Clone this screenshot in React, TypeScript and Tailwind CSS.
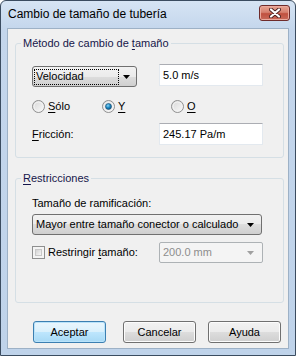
import React from "react";

const U = ({ children }: { children: React.ReactNode }) => (
  <span className="underline decoration-1 underline-offset-[2px]">{children}</span>
);

const Arrow = ({ color = "#000" }: { color?: string }) => (
  <svg width="7" height="4" viewBox="0 0 7 4">
    <path d="M0 0h7L3.5 4z" fill={color} />
  </svg>
);

const Radio = ({ checked }: { checked?: boolean }) => (
  <svg width="13" height="13" viewBox="0 0 13 13">
    <defs>
      <linearGradient id="rg" x1="0" y1="0" x2="1" y2="1">
        <stop offset="0" stopColor="#d6d6d6" />
        <stop offset="1" stopColor="#fbfbfb" />
      </linearGradient>
      <radialGradient id="rd" cx="0.4" cy="0.35" r="0.7">
        <stop offset="0" stopColor="#8cd4f5" />
        <stop offset="0.5" stopColor="#1d8ac4" />
        <stop offset="1" stopColor="#0b4f7c" />
      </radialGradient>
    </defs>
    <circle cx="6.5" cy="6.5" r="6" fill="url(#rg)" stroke="#8f8f8f" />
    <circle cx="6.5" cy="6.5" r="4.5" fill="none" stroke="#f4f4f4" />
    {checked && <circle cx="6.5" cy="6.5" r="3" fill="url(#rd)" stroke="#1b4f75" strokeWidth="0.6" />}
  </svg>
);

const TextBox = ({ value }: { value: string }) => (
  <div className="w-[104px] h-[22px] bg-white border border-[#e3e9ef] border-t-[#abadb3] flex items-center pl-[3px] text-black">
    {value}
  </div>
);

const Button = ({ label, primary }: { label: string; primary?: boolean }) => (
  <div
    className={
      "w-[73px] h-[22px] rounded-[3px] border flex items-center justify-center text-black " +
      (primary
        ? "border-[#3c7fb1] bg-[linear-gradient(#eaf6fd,#d9f0fc_50%,#bee6fd_50%,#a7d9f5)] shadow-[inset_0_0_0_1px_#b9e3fa]"
        : "border-[#707070] bg-[linear-gradient(#f2f2f2,#ebebeb_50%,#dddddd_50%,#cfcfcf)] shadow-[inset_0_0_0_1px_#fcfcfc]")
    }
  >
    {label}
  </div>
);

export default function App() {
  return (
    <div
      className="w-[296px] h-[356px] flex flex-col border border-[#3b4c60] rounded-t-[6px] bg-[linear-gradient(#d6e4f4,#c4d6ec_28px,#bfd3ea)] text-[11px] leading-[13px]"
      style={{ fontFamily: '"Liberation Sans", Arial, sans-serif' }}
    >
      <div className="h-[27px] flex items-center justify-between pl-[7px] pr-[5px]">
        <span className="text-[12px] text-black">Cambio de tamaño de tubería</span>
        <div className="w-[31px] h-[16px] mt-[-3px] rounded-[3px] border border-[#6e2b2b] bg-[linear-gradient(#e8a493,#d6806f_45%,#c0503f_55%,#c86a5a)] shadow-[inset_0_0_0_1px_#eaa99d] flex items-center justify-center">
          <svg width="12" height="10" viewBox="0 0 12 10">
            <path d="M2 1.5l8 7M10 1.5l-8 7" stroke="#4a2020" strokeWidth="4" strokeLinecap="round" />
            <path d="M2 1.5l8 7M10 1.5l-8 7" stroke="#fff" strokeWidth="2.2" strokeLinecap="round" />
          </svg>
        </div>
      </div>

      <div className="mx-[6px] mb-[6px] flex-1 border border-[#9db1c6] bg-[#f0f0f0] flex flex-col">
        <fieldset className="ml-[7px] mt-[7px] w-[269px] border border-[#d5dfe5] rounded-[3px] pl-[16px] pt-[14px] pb-[12px]">
          <legend className="ml-[-11px] px-[2px] text-[11px] leading-[14px] text-[#16164a]">
            Método de cambio de <U>t</U>amaño
          </legend>
          <div className="flex items-start">
            <div className="mt-[2px] w-[105px] h-[21px] rounded-[3px] border border-[#707070] bg-[linear-gradient(#f2f2f2,#ebebeb_50%,#dddddd_50%,#cfcfcf)] flex items-center pl-[1px] pr-[6px]">
              <div className="w-[85px] h-[16px] border border-dotted border-black flex items-center pl-[1px] text-black">
                Velocidad
              </div>
              <div className="ml-auto">
                <Arrow />
              </div>
            </div>
            <div className="ml-[22px]">
              <TextBox value="5.0 m/s" />
            </div>
          </div>
          <div className="mt-[13px] flex items-center h-[13px] text-black">
            <div className="w-[70px] flex items-center gap-[3px]">
              <Radio />
              <span><U>S</U>ólo</span>
            </div>
            <div className="w-[69px] flex items-center gap-[3px]">
              <Radio checked />
              <span><U>Y</U></span>
            </div>
            <div className="flex items-center gap-[3px]">
              <Radio />
              <span><U>O</U></span>
            </div>
          </div>
          <div className="mt-[10px] flex items-center text-black">
            <span className="w-[127px]"><U>F</U>ricción:</span>
            <TextBox value="245.17 Pa/m" />
          </div>
        </fieldset>

        <fieldset className="ml-[7px] mt-[13px] w-[269px] border border-[#d5dfe5] rounded-[3px] pl-[16px] pt-[12px] pb-[39px]">
          <legend className="ml-[-11px] px-[2px] text-[11px] leading-[14px] text-[#16164a]">
            <U>R</U>estricciones
          </legend>
          <div className="text-black">Tamaño de ramificación:</div>
          <div className="mt-[4px] w-[230px] h-[21px] rounded-[3px] border border-[#707070] bg-[linear-gradient(#f2f2f2,#ebebeb_50%,#dddddd_50%,#cfcfcf)] flex items-center pl-[3px] pr-[7px] text-black">
            Mayor entre tamaño conector o calculado
            <div className="ml-auto">
              <Arrow />
            </div>
          </div>
          <div className="mt-[7px] flex items-center text-black">
            <div className="w-[127px] flex items-center gap-[3px]">
              <div className="w-[13px] h-[13px] border border-[#8e8f8f] bg-[#f4f4f4] p-[2px]">
                <div className="w-full h-full bg-[linear-gradient(135deg,#d3d3d3,#f6f6f6)] border border-[#c8c8c8]" />
              </div>
              <span>Restringir <U>t</U>amaño:</span>
            </div>
            <div className="w-[104px] h-[21px] rounded-[2px] border border-[#adb2b5] bg-[#f4f4f4] flex items-center pl-[3px] pr-[8px] text-[#8d8d8d]">
              200.0 mm
              <div className="ml-auto">
                <Arrow color="#a0a0a0" />
              </div>
            </div>
          </div>
        </fieldset>

        <div className="mt-[18px] ml-[25px] flex">
          <Button label="Aceptar" primary />
          <div className="ml-[17px]">
            <Button label="Cancelar" />
          </div>
          <div className="ml-[12px]">
            <Button label="Ayuda" />
          </div>
        </div>
      </div>
    </div>
  );
}
